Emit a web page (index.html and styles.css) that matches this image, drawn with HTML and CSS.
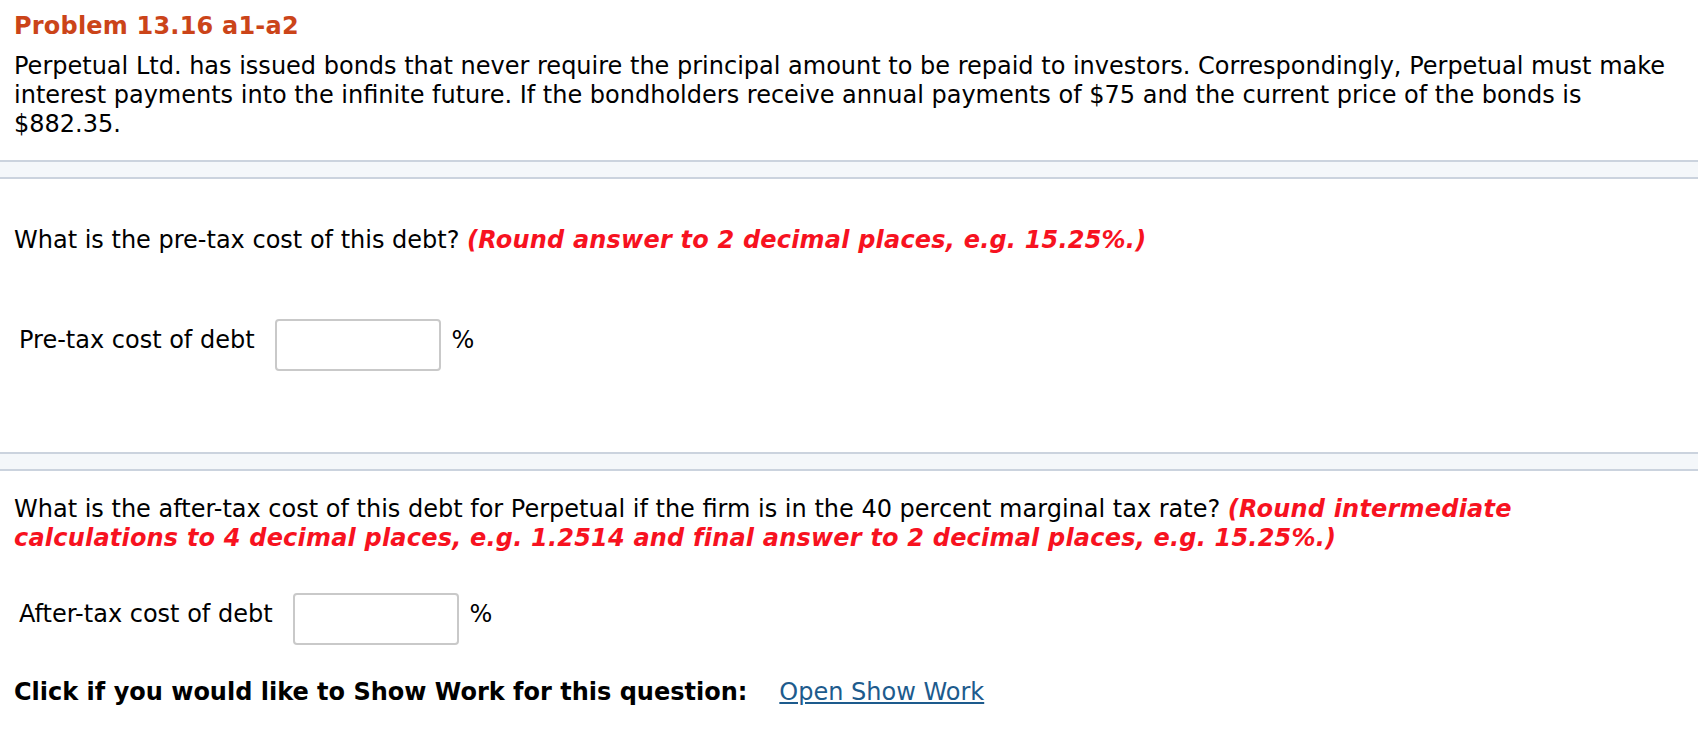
FILE: index.html
```html
<!DOCTYPE html>
<html lang="en">
<head>
    <meta charset="UTF-8">
    <meta name="viewport" content="width=device-width, initial-scale=1.0">
    <title>Problem 13.16 a1-a2</title>
    <link rel="stylesheet" href="styles.css">
</head>
<body>
    <div class="problem">
        <h1 class="problem-title">Problem 13.16 a1-a2</h1>
        <p class="problem-text">Perpetual Ltd. has issued bonds that never require the principal amount to be repaid to investors. Correspondingly, Perpetual must make interest payments into the infinite future. If the bondholders receive annual payments of $75 and the current price of the bonds is $882.35.</p>
    </div>

    <div class="divider"></div>

    <!-- Part a1 -->
    <div class="part part-first">
        <p class="question">What is the pre-tax cost of this debt? <span class="hint">(Round answer to 2 decimal places, e.g. 15.25%.)</span></p>
        <div class="answer-row answer-row-first">
            <label class="answer-label" for="pretax">Pre-tax cost of debt</label>
            <input type="text" id="pretax" class="answer-input">
            <span class="answer-unit">%</span>
        </div>
    </div>

    <div class="divider divider-second"></div>

    <!-- Part a2 -->
    <div class="part part-second">
        <p class="question">What is the after-tax cost of this debt for Perpetual if the firm is in the 40 percent marginal tax rate? <span class="hint">(Round intermediate calculations to 4 decimal places, e.g. 1.2514 and final answer to 2 decimal places, e.g. 15.25%.)</span></p>
        <div class="answer-row answer-row-second">
            <label class="answer-label" for="aftertax">After-tax cost of debt</label>
            <input type="text" id="aftertax" class="answer-input">
            <span class="answer-unit">%</span>
        </div>
        <div class="show-work">
            <span class="show-work-text">Click if you would like to Show Work for this question:</span>
            <a href="#" class="show-work-link">Open Show Work</a>
        </div>
    </div>
</body>
</html>
```

FILE: styles.css
```css
body {
    margin: 0;
    font-family: "DejaVu Sans", Verdana, sans-serif;
    font-size: 24px;
    line-height: 29px;
    color: #000;
    background-color: #fff;
}

p {
    margin: 0;
}

.problem {
    padding: 12px 14px 0 14px;
}

.problem-title {
    margin: 0;
    font-size: 24px;
    line-height: 29px;
    font-weight: bold;
    letter-spacing: 0.2px;
    color: #cb4419;
}

.problem-text {
    margin-top: 11px;
}

.divider {
    margin-top: 21px;
    height: 15px;
    background-color: #f4f7fa;
    border-top: 2px solid #cbd3de;
    border-bottom: 2px solid #cbd3de;
}

.divider-second {
    margin-top: 81px;
}

.part {
    padding: 0 14px;
}

.part-first {
    padding-top: 47px;
}

.part-second {
    padding-top: 24px;
}

.question {
    max-width: 1620px;
}

.hint {
    color: #f7121f;
    font-weight: bold;
    font-style: italic;
    letter-spacing: 0.2px;
}

.answer-row {
    display: flex;
    align-items: flex-start;
}

.answer-row-first {
    margin-top: 64px;
}

.answer-row-second {
    margin-top: 40px;
}

.answer-label {
    margin-left: 5px;
    padding-top: 7px;
    margin-right: 20px;
}

.answer-input {
    width: 166px;
    height: 52px;
    box-sizing: border-box;
    border: 2px solid #c9c9c9;
    border-radius: 4px;
    background-color: #fff;
    font-family: inherit;
    font-size: 24px;
    padding: 0 8px;
}

.answer-unit {
    padding-top: 7px;
    margin-left: 11px;
}

.show-work {
    margin-top: 33px;
    display: flex;
}

.show-work-text {
    font-weight: bold;
}

.show-work-link {
    margin-left: 32px;
    color: #1d5b8d;
    text-decoration: underline;
}
```
